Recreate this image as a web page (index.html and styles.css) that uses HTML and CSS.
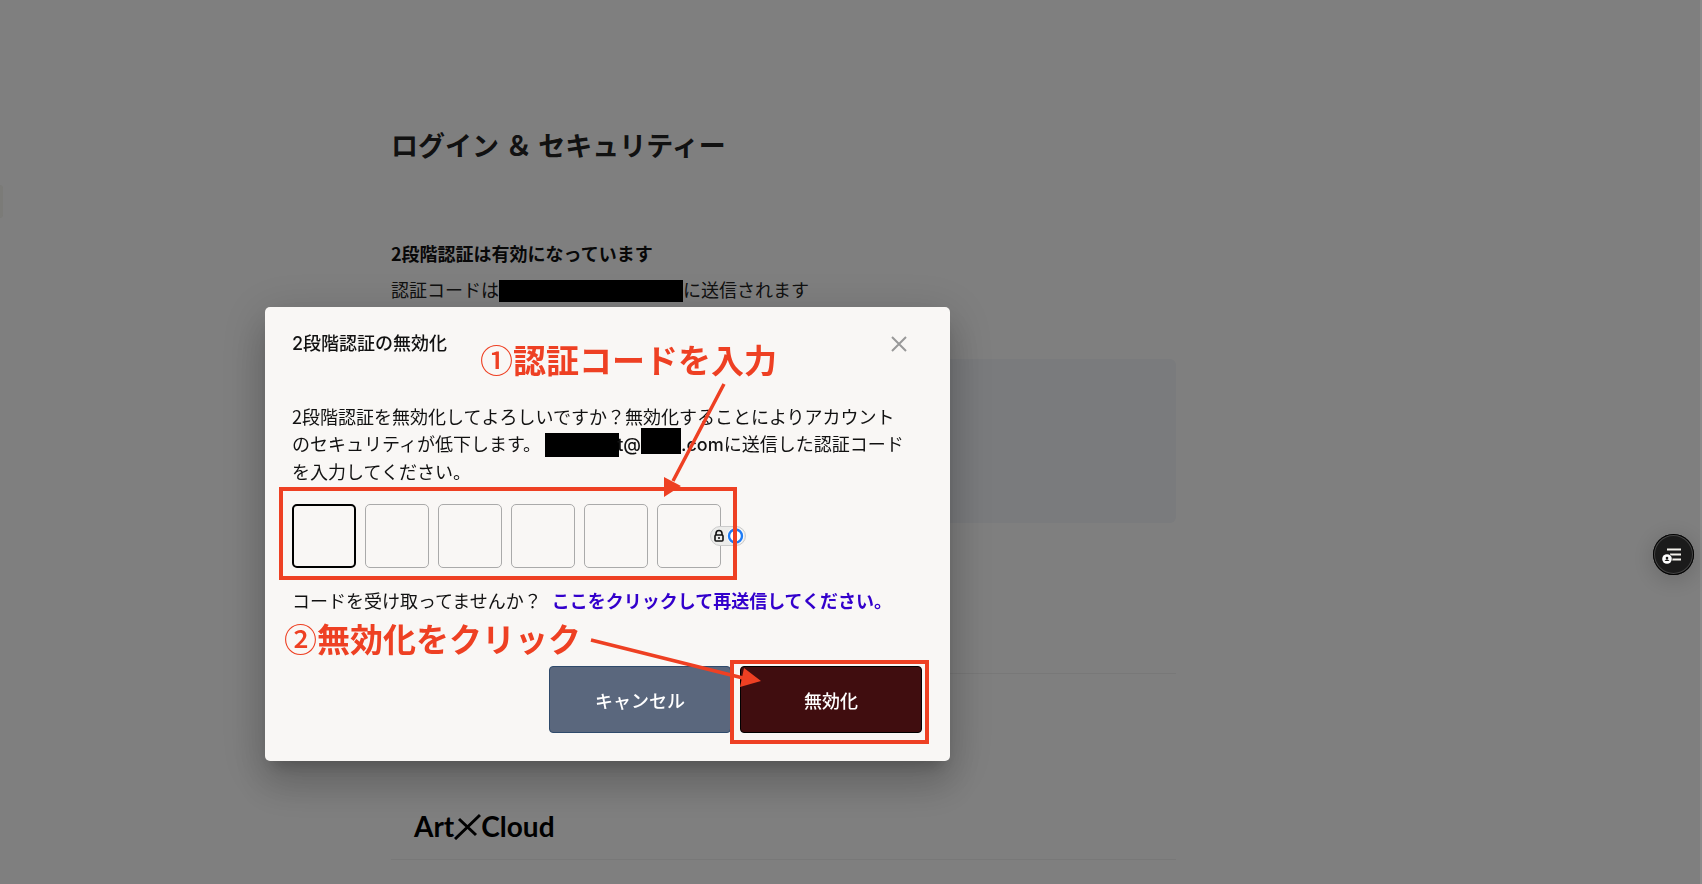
FILE: index.html
```html
<!DOCTYPE html>
<html lang="ja">
<head>
	<meta charset="UTF-8">
	<title>ログイン ＆ セキュリティー</title>
	<link rel="stylesheet" href="styles.css">
</head>
<body>
	<div id="main">
		<h1>ログイン ＆ セキュリティー</h1>
		<h2>2段階認証は有効になっています</h2>
		<p class="sendto">認証コードは<span class="mask mask-mail"></span>に送信されます</p>
		<div class="panel"></div>
		<div class="line"></div>
		<div class="card">
			<div class="logo">
				<span>Art</span>
				<svg width="27" height="27" viewBox="0 0 27 27">
					<path d="M1 26L26 2M5 6L22 22" fill="none" stroke="#000" stroke-width="3"/>
				</svg>
				<span>Cloud</span>
			</div>
		</div>
	</div>

	<div class="overlay">
		<div class="modal" role="dialog" aria-labelledby="modal-title">
			<div class="modal-head">
				<h3 id="modal-title">2段階認証の無効化</h3>
				<button class="close" type="button" aria-label="閉じる">
					<svg width="16" height="16" viewBox="0 0 16 16">
						<path d="M1 1L15 15M15 1L1 15" fill="none" stroke="#999" stroke-width="2"/>
					</svg>
				</button>
			</div>
			<p class="text">2段階認証を無効化してよろしいですか？無効化することによりアカウントのセキュリティが低下します。<span class="mask mask-user"></span><b class="mail">t@</b><span class="mask mask-host"></span><b class="mail">.com</b>に送信した認証コードを入力してください。</p>
			<div class="code">
				<input class="on" type="text" maxlength="1" aria-label="1桁目">
				<input type="text" maxlength="1" aria-label="2桁目">
				<input type="text" maxlength="1" aria-label="3桁目">
				<input type="text" maxlength="1" aria-label="4桁目">
				<input type="text" maxlength="1" aria-label="5桁目">
				<input type="text" maxlength="1" aria-label="6桁目">
				<span class="lock">
					<svg width="36" height="20" viewBox="0 0 36 20">
						<rect x="0.500" y="0.500" width="35" height="19" rx="9.500" fill="#ececea" stroke="#ccc"/>
						<rect x="5" y="9" width="8" height="6" rx="1" fill="none" stroke="#111" stroke-width="1.600"/>
						<path d="M6 9V7.500a3 3 0 0 1 6 0V9" fill="none" stroke="#111" stroke-width="1.600"/>
						<circle cx="9" cy="12" r="1" fill="#111"/>
						<circle cx="25.500" cy="10" r="8.500" fill="#fff"/>
						<circle cx="25.500" cy="10" r="6.500" fill="none" stroke="#1f7cf5" stroke-width="2.400"/>
					</svg>
				</span>
			</div>
			<p class="resend">コードを受け取ってませんか？ <a href="#">ここをクリックして再送信してください。</a></p>
			<div class="btns">
				<button class="btn cancel" type="button">キャンセル</button>
				<button class="btn disable" type="button">無効化</button>
			</div>

			<!-- 操作手順 -->
			<svg class="guide" width="685" height="453" viewBox="0 0 685 453">
				<g fill="none" stroke="#ee4023" stroke-width="4">
					<rect x="16" y="182" width="454" height="89"/>
					<rect x="467" y="355" width="195" height="80"/>
					<path d="M459 77L408 174M326 333L478 371" stroke-width="3.500"/>
				</g>
				<path d="M399 170V190L416 179ZM479 361L475 380L496 374Z" fill="#ee4023"/>
			</svg>
			<span class="step step1"><i>①</i>認証コードを入力</span>
			<span class="step step2"><i>②</i>無効化をクリック</span>
		</div>
	</div>

	<div class="tab"></div>
	<div class="edge"></div>
	<button class="float" type="button" aria-label="メニュー">
		<svg width="41" height="41" viewBox="0 0 41 41">
			<path d="M14 15.500H28M17 20.500H28M19 25.500H28" fill="none" stroke="#f3f1ec" stroke-width="2"/>
			<circle cx="14" cy="25" r="5.500" fill="#1b1b1b"/>
			<circle cx="14" cy="25" r="4.800" fill="#fff"/>
			<circle cx="14" cy="24" r="1.300" fill="#1b1b1b"/>
			<path d="M11.500 27Q14 23.500 16.500 27Z" fill="#1b1b1b"/>
		</svg>
	</button>
</body>
</html>
```

FILE: styles.css
```css
*{
	margin: 0;
	padding: 0;
	box-sizing: border-box;
}
body{
	height: 100vh;
	overflow: hidden;
	background-color: #fff;
	color: #111;
	font-family: "Noto Sans CJK JP", sans-serif;
	font-size: 18px;
	line-height: 27px;
}
#main{
	max-width: 1176px;
	padding: 125px 0 0 391px;
}
h1{
	font-size: 27px;
	line-height: 40px;
	color: #222;
}
h2{
	margin-top: 75px;
	font-size: 18px;
	line-height: 27px;
}
.sendto{
	margin-top: 9px;
	color: #222;
}
.mask{
	display: inline-block;
	height: 24px;
	margin: -4px 0;
	background-color: #000;
	vertical-align: -2px;
}
.mask-mail{
	width: 184px;
	height: 22px;
	vertical-align: -1px;
}
.mask-user{
	width: 74px;
	margin-left: 4px;
	margin-right: -2px;
}
.mask-host{
	width: 40px;
	height: 26px;
	vertical-align: 1px;
}
.panel{
	height: 164px;
	margin-top: 56px;
	border-radius: 6px;
	background-color: #f4f6fa;
}
.line{
	height: 1px;
	margin-top: 150px;
	background-color: #f0f0f0;
}
.card{
	height: 67px;
	margin-top: 119px;
	padding: 0 23px;
	display: flex;
	align-items: center;
	border-bottom: 1px solid #f0f0f0;
}
.logo{
	display: flex;
	align-items: center;
	color: #000;
	font-family: Lato, sans-serif;
	font-size: 28px;
	font-weight: bold;
}
.overlay{
	position: fixed;
	inset: 0;
	padding: 307px 0 0 265px;
	background-color: rgba(0,0,0,.5);
}
.modal{
	position: relative;
	max-width: 685px;
	padding: 23px 28px 28px 27px;
	border-radius: 5px;
	background-color: #f9f7f5;
	color: #111;
	box-shadow: 0 11px 15px -7px rgba(0,0,0,.2), 0 24px 38px 3px rgba(0,0,0,.14), 0 9px 46px 8px rgba(0,0,0,.12);
}
.modal-head{
	display: flex;
	justify-content: space-between;
	align-items: center;
	padding-right: 14px;
}
h3{
	font-family: Inter, "Noto Sans CJK JP", sans-serif;
	font-size: 18px;
	font-weight: 500;
}
.close{
	width: 18px;
	height: 18px;
	display: flex;
	align-items: center;
	justify-content: center;
	border: 0;
	background: none;
}
.text{
	max-width: 620px;
	margin-top: 46px;
}
.mail{
	font-family: Inter, sans-serif;
	font-weight: 500;
}
.code{
	position: relative;
	display: flex;
	gap: 9px;
	width: fit-content;
	margin-top: 19px;
}
.code input{
	width: 64px;
	height: 64px;
	border: 1px solid #aaa;
	border-radius: 5px;
	background: none;
	font-size: 24px;
	text-align: center;
}
.code .on{
	border: 2px solid #000;
}
.lock{
	position: absolute;
	right: -25px;
	top: 22px;
	display: flex;
}
.resend{
	margin-top: 19px;
}
.resend a{
	margin-left: 6px;
	color: #3300cc;
	font-weight: bold;
	text-decoration: none;
}
.btns{
	display: flex;
	justify-content: flex-end;
	gap: 9px;
	margin-top: 52px;
}
.btn{
	width: 182px;
	height: 67px;
	border: 1px solid #2f4a6b;
	border-radius: 4px;
	background-color: #5a677d;
	color: #fff;
	font-family: inherit;
	font-size: 18px;
	font-weight: 500;
}
.disable{
	border-color: #000;
	background-color: #400d0f;
}
.guide{
	position: absolute;
	left: 0;
	top: 0;
	pointer-events: none;
}
.step{
	position: absolute;
	color: #ee4023;
	font-size: 33px;
	font-weight: bold;
	line-height: 40px;
	white-space: nowrap;
}
.step i{
	font-style: normal;
	font-weight: 500;
}
.step1{
	left: 215px;
	top: 32px;
}
.step2{
	left: 19px;
	top: 311px;
}
.tab{
	position: fixed;
	left: 0;
	top: 185px;
	width: 3px;
	height: 33px;
	border-radius: 0 4px 4px 0;
	background-color: #7b7b78;
}
.edge{
	position: fixed;
	right: 0;
	top: 0;
	bottom: 0;
	width: 2px;
	background-color: #8b8b8b;
}
.float{
	position: fixed;
	right: 8px;
	top: 534px;
	width: 41px;
	height: 41px;
	border: 0;
	border-radius: 50%;
	background-color: #1b1b1b;
	box-shadow: inset 0 0 0 1px #000, inset 0 0 0 2px #444, 0 4px 24px rgba(0,0,0,.2);
}
```
